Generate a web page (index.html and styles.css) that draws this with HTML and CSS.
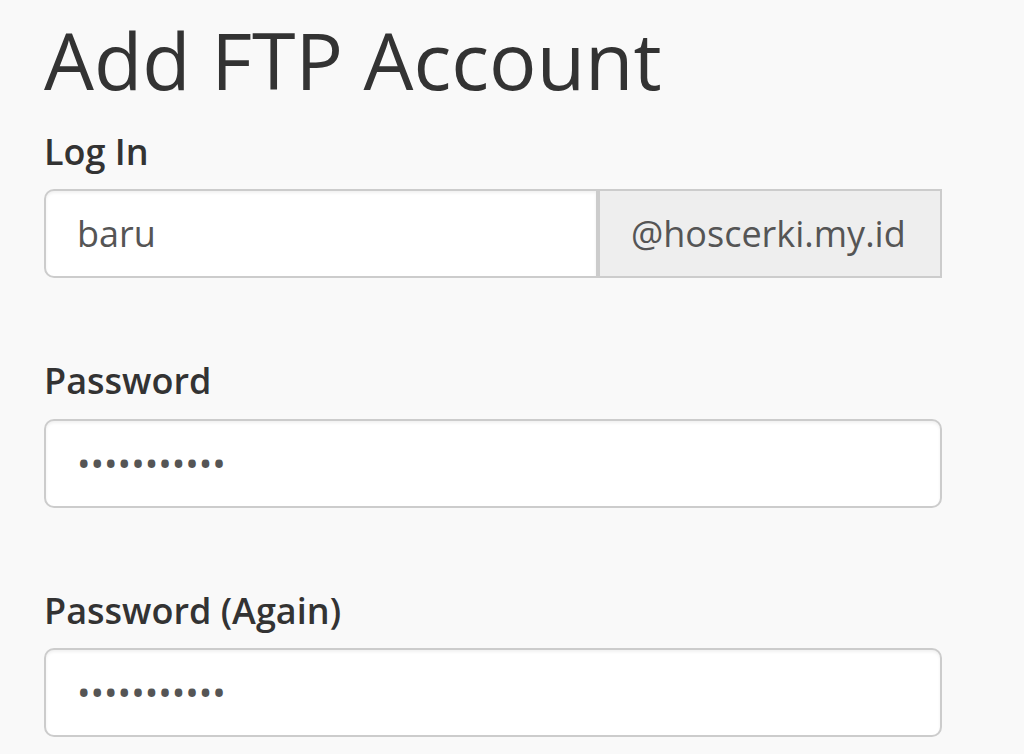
FILE: index.html
```html
<!DOCTYPE html>
<html lang="en">
<head>
<meta charset="utf-8">
<title>Add FTP Account</title>
<link rel="stylesheet" href="styles.css">
</head>
<body>
<main class="page">
  <h1 class="title">Add FTP Account</h1>
  <form class="ftp-form">
    <div class="form-group">
      <label class="label" for="login">Log In</label>
      <div class="input-group">
        <input class="field field-grouped" id="login" type="text" value="baru">
        <span class="addon">@hoscerki.my.id</span>
      </div>
    </div>
    <div class="form-group">
      <label class="label" for="pass">Password</label>
      <input class="field" id="pass" type="password" value="abcdefghijk">
    </div>
    <div class="form-group">
      <label class="label" for="pass2">Password (Again)</label>
      <input class="field" id="pass2" type="password" value="abcdefghijk">
    </div>
  </form>
</main>
</body>
</html>
```

FILE: styles.css
```css
html, body {
  margin: 0;
  padding: 0;
  background: #f9f9f9;
}

body {
  font-family: "Open Sans", "Noto Sans", sans-serif;
  font-size: 36px;
  line-height: 1.42857;
  color: #333333;
}

.page {
  width: 898px;
  padding-left: 44px;
}

.title {
  font-size: 79px;
  font-weight: 400;
  line-height: 88px;
  margin: 16px 0 22px;
  color: #333333;
}

.ftp-form {
  display: flex;
  flex-direction: column;
  gap: 77px;
}

.label {
  display: block;
  font-weight: 600;
  margin-bottom: 12px;
}

.input-group {
  display: flex;
}

.field {
  box-sizing: border-box;
  display: block;
  width: 100%;
  height: 89px;
  padding: 0 31px;
  font-family: inherit;
  font-size: 36px;
  color: #555555;
  background: #ffffff;
  border: 2.6px solid #cccccc;
  border-radius: 10px;
  box-shadow: inset 0 2px 3px rgba(0, 0, 0, 0.06);
  outline: none;
}

.field-grouped {
  width: 554px;
  flex: none;
  border-top-right-radius: 0;
  border-bottom-right-radius: 0;
}

.addon {
  box-sizing: border-box;
  display: flex;
  align-items: center;
  width: 344px;
  height: 89px;
  padding: 0 31px;
  background: #eeeeee;
  border: 2.6px solid #cccccc;
  border-left-width: 2px;
  color: #555555;
  font-size: 36px;
  white-space: nowrap;
}
```
